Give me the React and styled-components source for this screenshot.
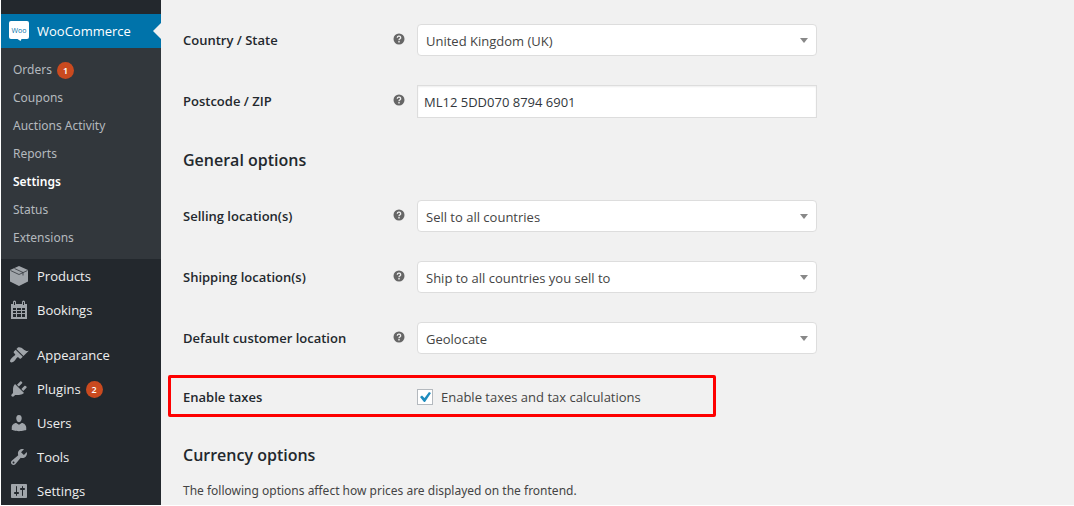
import styled, { createGlobalStyle, css } from 'styled-components';
import { useState } from 'react';

const submenu = [
    { name: 'Orders', count: 1 },
    { name: 'Coupons' },
    { name: 'Auctions Activity' },
    { name: 'Reports' },
    { name: 'Settings', current: true },
    { name: 'Status' },
    { name: 'Extensions' },
];

const WooIcon = () => (
    <svg width="20" height="20" viewBox="0 0 20 20">
        <path fill="#fff" d="M2 0h16a2 2 0 0 1 2 2v14a2 2 0 0 1-2 2h-5.500l-1 2-3-2H2a2 2 0 0 1-2-2V2a2 2 0 0 1 2-2z" />
        <text x="10" y="12" textAnchor="middle" fontSize="7" fontFamily="Open Sans, sans-serif" fill="#0073aa">Woo</text>
    </svg>
);

const ProductsIcon = () => (
    <svg width="20" height="20" viewBox="0 0 20 20" fill="currentColor">
        <path d="M10 0l9 4v11.500L10 20l-9-4.500V4z" />
        <path d="M1.500 4.500L10 8.500l8.500-4M5.500 2.500l8.500 4v3" fill="none" stroke="#23282d" strokeWidth="1" opacity=".7" />
    </svg>
);

const BookingsIcon = () => (
    <svg width="20" height="20" viewBox="0 0 20 20">
        <path fill="currentColor" d="M2 4h2V2a1.500 1.500 0 0 1 3 0v2h6V2a1.500 1.500 0 0 1 3 0v2h2v15H2z" />
        <path fill="#23282d" d="M5 2h1v3H5zM14 2h1v3h-1z" />
        <path fill="#23282d" d="M4 8h3v2H4zM8 8h4v2H8zM13 8h3v2h-3zM4 11h3v2H4zM8 11h4v2H8zM13 11h3v2h-3zM4 14h3v3H4zM8 14h4v3H8zM13 14h3v3h-3z" />
    </svg>
);

const Dashicon = ({ d }) => (
    <svg width="20" height="20" viewBox="0 0 20 20" fill="currentColor">
        <path d={d} />
    </svg>
);

const paths = {
    appearance: 'M14.48 11.06L7.41 3.99l1.5-1.5c.5-.56 2.3-.47 3.51.32 1.21.8 1.43 1.28 2.91 2.1 1.18.64 2.45 1.26 4.45.85zm-.71.71L6.7 4.7 4.93 6.47c-.39.39-.39 1.02 0 1.41l1.06 1.06c.39.39.39 1.03 0 1.42-.6.6-1.43 1.11-2.21 1.69-.35.26-.7.53-1.01.84C1.43 14.23.4 16.08 1.4 17.07c.99 1 2.84-.03 4.18-1.36.31-.31.58-.66.85-1.02.57-.78 1.08-1.61 1.69-2.21.39-.39 1.02-.39 1.41 0l1.06 1.06c.39.39 1.02.39 1.41 0z',
    plugins: 'M13.11 4.36L9.87 7.6 8 5.73l3.24-3.24c.35-.34 1.05-.2 1.56.32.52.51.66 1.21.31 1.55zm-8 1.77l.91-1.12 9.01 9.01-1.19.84c-.71.71-2.63 1.16-3.82 1.16H6.14L4.9 17.26c-.59.59-1.54.59-2.12 0-.59-.58-.59-1.53 0-2.12l1.24-1.24v-3.88c0-1.13.4-3.19 1.09-3.89zm7.26 3.97l3.24-3.24c.34-.35 1.04-.21 1.55.31.52.51.66 1.21.31 1.55l-3.24 3.25z',
    users: 'M10 9.25c-2.27 0-2.73-3.44-2.73-3.44C7 4.02 7.82 2 9.97 2c2.16 0 2.98 2.02 2.71 3.81 0 0-.41 3.44-2.68 3.44zm0 2.57L12.72 10c2.39 0 4.52 2.33 4.52 4.53v2.49s-3.65 1.13-7.24 1.13c-3.65 0-7.24-1.13-7.24-1.13v-2.49c0-2.25 1.94-4.48 4.47-4.48z',
    tools: 'M16.68 9.77c-1.34 1.34-3.3 1.67-4.95.99l-5.41 6.52c-.99.99-2.59.99-3.58 0s-.99-2.59 0-3.57l6.52-5.42c-.68-1.65-.35-3.61.99-4.95 1.28-1.28 3.12-1.62 4.72-1.06l-2.89 2.89 2.82 2.82 2.86-2.87c.53 1.58.18 3.39-1.08 4.65zM3.81 16.21c.4.39 1.04.39 1.43 0 .4-.4.4-1.04 0-1.43-.39-.4-1.03-.4-1.43 0-.39.39-.39 1.03 0 1.43z',
    settings: 'M18 16V4c0-.55-.45-1-1-1H3c-.55 0-1 .45-1 1v12c0 .55.45 1 1 1h14c.55 0 1-.45 1-1zM8 11h1c.55 0 1 .45 1 1s-.45 1-1 1H8v1.5c0 .28-.22.5-.5.5s-.5-.22-.5-.5V13H6c-.55 0-1-.45-1-1s.45-1 1-1h1V5.5c0-.28.22-.5.5-.5s.5.22.5.5V11zm5-2h-1c-.55 0-1-.45-1-1s.45-1 1-1h1V5.5c0-.28.22-.5.5-.5s.5.22.5.5V7h1c.55 0 1 .45 1 1s-.45 1-1 1h-1v5.5c0 .28-.22.5-.5.5s-.5-.22-.5-.5V9z',
};

const HelpTip = () => (
    <HelpSvg viewBox="0 0 12 12">
        <circle cx="6" cy="6" r="5.500" fill="#666" />
        <path d="M4.300 4.700a1.700 1.500 0 1 1 2.600 1.200Q6 6.300 6 7.200" fill="none" stroke="#f1f1f1" strokeWidth="1.300" />
        <path d="M5.300 8h1.400v1.400H5.300z" fill="#f1f1f1" />
    </HelpSvg>
);

const SelectRow = ({ id, label, value }) => (
    <Row>
        <Label htmlFor={id}>{label}</Label>
        <HelpTip />
        <SelectWrapper>
            <Select id={id} defaultValue={value}>
                <option>{value}</option>
            </Select>
        </SelectWrapper>
    </Row>
);

export default function App() {
    const [postcode, setPostcode] = useState('ML12 5DD070 8794 6901');
    const [taxes, setTaxes] = useState(true);

    return (
        <>
            <GlobalStyle />
            <Page>
                <Sidebar>
                    <MenuLink href="#woocommerce" $current>
                        <WooIcon />
                        WooCommerce
                    </MenuLink>
                    <Submenu>
                        {submenu.map((item) => (
                            <SubmenuLink key={item.name} href="#" $current={item.current}>
                                {item.name}
                                {item.count && <Badge>{item.count}</Badge>}
                            </SubmenuLink>
                        ))}
                    </Submenu>
                    <MenuLink href="#products"><ProductsIcon />Products</MenuLink>
                    <MenuLink href="#bookings"><BookingsIcon />Bookings</MenuLink>
                    <Separator />
                    <MenuLink href="#appearance"><Dashicon d={paths.appearance} />Appearance</MenuLink>
                    <MenuLink href="#plugins"><Dashicon d={paths.plugins} />Plugins<Badge>2</Badge></MenuLink>
                    <MenuLink href="#users"><Dashicon d={paths.users} />Users</MenuLink>
                    <MenuLink href="#tools"><Dashicon d={paths.tools} />Tools</MenuLink>
                    <MenuLink href="#settings"><Dashicon d={paths.settings} />Settings</MenuLink>
                </Sidebar>

                <Content>
                    <SelectRow id="country" label="Country / State" value="United Kingdom (UK)" />
                    <Row>
                        <Label htmlFor="postcode">Postcode / ZIP</Label>
                        <HelpTip />
                        <TextInput id="postcode" value={postcode} onChange={(e) => setPostcode(e.target.value)} />
                    </Row>

                    <Heading>General options</Heading>
                    <SelectRow id="selling" label="Selling location(s)" value="Sell to all countries" />
                    <SelectRow id="shipping" label="Shipping location(s)" value="Ship to all countries you sell to" />
                    <SelectRow id="customer" label="Default customer location" value="Geolocate" />

                    <TaxRow>
                        <Label htmlFor="taxes">Enable taxes</Label>
                        <CheckLabel>
                            <CheckBox>
                                <input id="taxes" type="checkbox" checked={taxes} onChange={(e) => setTaxes(e.target.checked)} />
                                {taxes && (
                                    <svg viewBox="0 0 16 16">
                                        <path d="M3 8l2-1.500 2.500 2.500L12 3l2 1-6 9H7z" fill="#1e8cbe" />
                                    </svg>
                                )}
                            </CheckBox>
                            Enable taxes and tax calculations
                        </CheckLabel>
                    </TaxRow>

                    <Heading>Currency options</Heading>
                    <Description>The following options affect how prices are displayed on the frontend.</Description>
                </Content>
            </Page>
        </>
    );
}

const GlobalStyle = createGlobalStyle`
    * {
        box-sizing: border-box;
    }
    body {
        margin: 0;
        background: #fff;
        color: #444;
        font-family: "Open Sans", "Noto Sans", sans-serif;
        font-size: 13px;
        line-height: 20px;
    }
`

const Page = styled.div`
    display: flex;
    height: 100vh;
    overflow: hidden;
    border: solid #fff;
    border-width: 0 0 1px 1px;
    background: #f1f1f1;
`

const Sidebar = styled.nav`
    flex: none;
    width: 160px;
    padding-top: 14px;
    background: #23282d;
`

const MenuLink = styled.a`
    position: relative;
    display: flex;
    align-items: center;
    height: 34px;
    padding-left: 8px;
    color: #eee;
    font-size: 13px;
    text-decoration: none;

    svg {
        flex: none;
        margin-right: 8px;
        color: #a0a5aa;
    }

    ${props => props.$current && css`
        background: #0073aa;
        color: #fff;

        &::after {
            content: '';
            position: absolute;
            top: 9px;
            right: 0;
            border: 8px solid transparent;
            border-left: 0;
            border-right-color: #f1f1f1;
        }
    `}
`

const Submenu = styled.div`
    padding: 8px 0 7px;
    background: #32373c;
`

const SubmenuLink = styled.a`
    display: flex;
    align-items: center;
    height: 28px;
    padding-left: 12px;
    color: ${props => props.$current ? '#fff' : '#b4b9be'};
    font-family: "Noto Sans", sans-serif;
    font-size: 12px;
    font-weight: ${props => props.$current ? 600 : 400};
    text-decoration: none;
`

const Badge = styled.span`
    width: 17px;
    height: 17px;
    margin-left: 5px;
    border-radius: 50%;
    background: #ca4a1f;
    color: #fff;
    font-size: 9px;
    font-weight: 600;
    line-height: 17px;
    text-align: center;
`

const Separator = styled.div`
    height: 11px;
`

const Content = styled.main`
    flex: 1;
    min-width: 0;
    padding: 10px 22px 0;
`

const Row = styled.div`
    display: grid;
    grid-template-columns: 210px 24px minmax(0, 400px);
    align-items: start;
    height: 61px;
    padding-top: 14px;
`

const Label = styled.label`
    color: #23282d;
    font-weight: 600;
    line-height: 32px;
`

const HelpSvg = styled.svg`
    width: 12px;
    height: 12px;
    margin-top: 9px;
`

const SelectWrapper = styled.div`
    position: relative;

    &::after {
        content: '';
        position: absolute;
        top: 14px;
        right: 9px;
        border: solid transparent;
        border-width: 5px 4px 0;
        border-top-color: #888;
        pointer-events: none;
    }
`

const Select = styled.select`
    display: block;
    width: 100%;
    height: 32px;
    padding: 2px 24px 0 8px;
    border: 1px solid #ddd;
    border-radius: 4px;
    background: #fff;
    color: #444;
    font: inherit;
    appearance: none;
`

const TextInput = styled.input`
    width: 100%;
    height: 33px;
    padding: 0 6px;
    border: 1px solid #ddd;
    background: #fff;
    box-shadow: inset 0 1px 2px rgba(0, 0, 0, 0.07);
    color: #32373c;
    font: inherit;
`

const Heading = styled.h2`
    margin: 0;
    padding: 18px 0 15px;
    color: #23282d;
    font-size: 16px;
    font-weight: 600;
    line-height: 21px;
`

const TaxRow = styled.div`
    display: grid;
    grid-template-columns: 234px 1fr;
    align-items: center;
    max-width: 548px;
    height: 42px;
    margin: 6px 0 10px -15px;
    padding: 2px 12px 0;
    border: 3px solid #fe0000;
    border-radius: 2px;
`

const CheckLabel = styled.label`
    display: flex;
    align-items: center;
    gap: 8px;
`

const CheckBox = styled.span`
    position: relative;
    width: 16px;
    height: 16px;

    input {
        display: block;
        width: 16px;
        height: 16px;
        margin: 0;
        border: 1px solid #b4b9be;
        background: #fff;
        appearance: none;
    }

    svg {
        position: absolute;
        inset: 0;
        pointer-events: none;
    }
`

const Description = styled.p`
    margin: 0;
    font-family: "Noto Sans", sans-serif;
    font-size: 12px;
    line-height: 20px;
`
